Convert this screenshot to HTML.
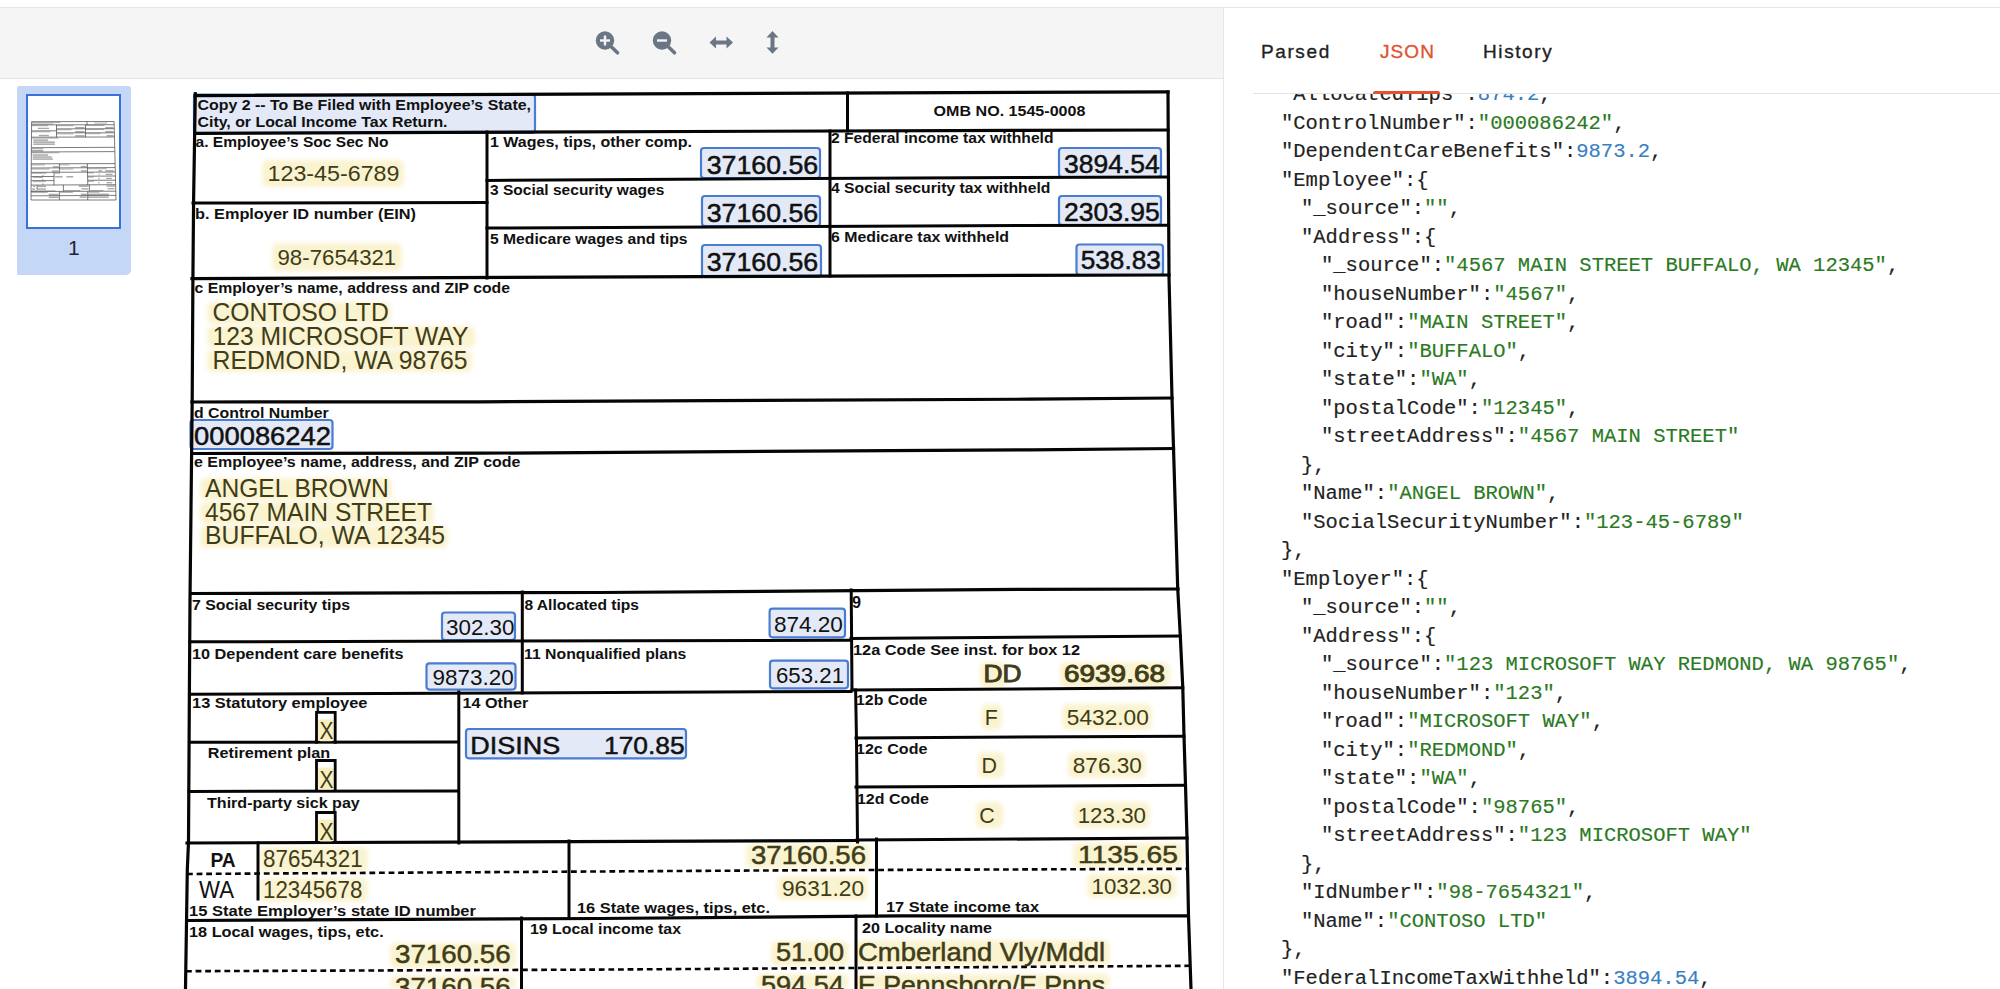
<!DOCTYPE html>
<html><head><meta charset="utf-8"><style>
html,body{margin:0;padding:0;}
body{width:2000px;height:989px;overflow:hidden;background:#fff;position:relative;font-family:"Liberation Sans",sans-serif;}
.abs{position:absolute;}
#topline{left:0;top:7px;width:2000px;height:1px;background:#e6e6e6;}
#toolbar{left:0;top:8px;width:1223px;height:70px;background:#f5f5f5;border-bottom:1px solid #e3e3e3;}
#vsep{left:1223px;top:8px;width:1px;height:981px;background:#e6e6e6;}
.form{position:absolute;left:0;top:0;}
#thumbbg{left:17px;top:85.5px;width:113.5px;height:189px;background:#c4d7f6;border-radius:2px 3px 5px 1px;}
#thumb{left:26px;top:94px;width:91px;height:131px;background:#fff;border:2.6px solid #3b6fd9;}
#thumbnum{left:17px;top:237.2px;width:113.5px;text-align:center;font-size:21px;line-height:21px;color:#1d2430;}
.tab{position:absolute;top:42px;font-size:19px;line-height:19px;color:#222;white-space:nowrap;letter-spacing:1.6px;-webkit-text-stroke:0.35px currentColor;}
#json{left:1223px;top:94px;width:777px;height:895px;overflow:hidden;}
.jl{position:absolute;white-space:pre;font-family:"Liberation Mono",monospace;font-size:20.5px;line-height:20.5px;-webkit-text-stroke:0.15px currentColor;}
</style></head><body>
<div class="abs" id="topline"></div>
<div class="abs" id="toolbar">
<svg style="position:absolute;left:0;top:0" width="1223" height="70" viewBox="0 8 1223 70">
 <g fill="#6b7684" stroke="none">
  <circle cx="605" cy="40.5" r="9.2"/>
  <circle cx="662" cy="40.5" r="9.2"/>
 </g>
 <g stroke="#6b7684" stroke-width="3.6" stroke-linecap="round">
  <line x1="611" y1="46.5" x2="617.5" y2="52.8"/>
  <line x1="668" y1="46.5" x2="674.5" y2="52.8"/>
 </g>
 <g stroke="#f5f5f5" stroke-width="2.4" stroke-linecap="butt">
  <line x1="600" y1="40.5" x2="610" y2="40.5"/>
  <line x1="605" y1="35.5" x2="605" y2="45.5"/>
  <line x1="657" y1="40.5" x2="667" y2="40.5"/>
 </g>
 <g fill="#6b7684">
  <path d="M709.5,42.5 L716,36.5 L716,40.5 L726.5,40.5 L726.5,36.5 L733,42.5 L726.5,48.5 L726.5,44.5 L716,44.5 L716,48.5 Z"/>
  <path d="M772.5,31 L778.5,37.5 L774.5,37.5 L774.5,47.5 L778.5,47.5 L772.5,53.8 L766.5,47.5 L770.5,47.5 L770.5,37.5 L766.5,37.5 Z"/>
 </g>
</svg>
</div>
<div class="abs" id="vsep"></div>
<div class="abs" id="thumbbg"></div>
<div class="abs" id="thumb"></div>
<svg style="position:absolute;left:0;top:0" width="150" height="300"><rect x="31.97" y="122.18" width="28.23" height="0.90" fill="#8a8a8a" opacity="0.75"/><rect x="31.97" y="123.56" width="21.17" height="0.90" fill="#8a8a8a" opacity="0.75"/><rect x="94.29" y="122.63" width="12.85" height="0.90" fill="#8a8a8a" opacity="0.75"/><rect x="31.80" y="125.25" width="16.34" height="0.90" fill="#8a8a8a" opacity="0.75"/><rect x="37.90" y="127.75" width="11.18" height="1.30" fill="#8a8a8a" opacity="0.75"/><rect x="31.76" y="131.39" width="18.71" height="0.90" fill="#8a8a8a" opacity="0.75"/><rect x="38.75" y="134.80" width="10.05" height="1.30" fill="#8a8a8a" opacity="0.75"/><rect x="56.74" y="125.25" width="17.10" height="0.90" fill="#8a8a8a" opacity="0.75"/><rect x="75.08" y="126.96" width="9.44" height="1.48" fill="#8a8a8a" opacity="0.75"/><rect x="56.74" y="129.33" width="14.76" height="0.90" fill="#8a8a8a" opacity="0.75"/><rect x="75.08" y="131.01" width="9.44" height="1.48" fill="#8a8a8a" opacity="0.75"/><rect x="56.74" y="133.47" width="16.73" height="0.90" fill="#8a8a8a" opacity="0.75"/><rect x="75.08" y="135.14" width="9.44" height="1.48" fill="#8a8a8a" opacity="0.75"/><rect x="85.61" y="124.93" width="18.84" height="0.90" fill="#8a8a8a" opacity="0.75"/><rect x="105.33" y="126.88" width="8.10" height="1.48" fill="#8a8a8a" opacity="0.75"/><rect x="85.61" y="129.16" width="18.57" height="0.90" fill="#8a8a8a" opacity="0.75"/><rect x="105.33" y="130.91" width="8.10" height="1.48" fill="#8a8a8a" opacity="0.75"/><rect x="85.61" y="133.29" width="15.07" height="0.90" fill="#8a8a8a" opacity="0.75"/><rect x="106.75" y="135.01" width="6.78" height="1.48" fill="#8a8a8a" opacity="0.75"/><rect x="31.72" y="137.64" width="26.71" height="0.90" fill="#8a8a8a" opacity="0.75"/><rect x="33.24" y="139.39" width="14.92" height="1.48" fill="#8a8a8a" opacity="0.75"/><rect x="33.24" y="141.42" width="21.67" height="1.48" fill="#8a8a8a" opacity="0.75"/><rect x="33.24" y="143.44" width="21.59" height="1.48" fill="#8a8a8a" opacity="0.75"/><rect x="31.68" y="148.22" width="11.41" height="0.90" fill="#8a8a8a" opacity="0.75"/><rect x="31.68" y="149.84" width="11.60" height="1.54" fill="#8a8a8a" opacity="0.75"/><rect x="31.68" y="152.39" width="27.64" height="0.90" fill="#8a8a8a" opacity="0.75"/><rect x="32.61" y="154.29" width="15.56" height="1.48" fill="#8a8a8a" opacity="0.75"/><rect x="32.61" y="156.30" width="19.22" height="1.48" fill="#8a8a8a" opacity="0.75"/><rect x="32.61" y="158.32" width="20.32" height="1.48" fill="#8a8a8a" opacity="0.75"/><rect x="31.51" y="164.47" width="13.38" height="0.90" fill="#8a8a8a" opacity="0.75"/><rect x="53.01" y="166.14" width="5.80" height="1.33" fill="#8a8a8a" opacity="0.75"/><rect x="59.65" y="164.44" width="9.70" height="0.90" fill="#8a8a8a" opacity="0.75"/><rect x="80.77" y="165.88" width="5.84" height="1.33" fill="#8a8a8a" opacity="0.75"/><rect x="87.38" y="164.19" width="0.76" height="0.95" fill="#8a8a8a" opacity="0.75"/><rect x="31.51" y="168.61" width="17.91" height="0.90" fill="#8a8a8a" opacity="0.75"/><rect x="51.87" y="170.39" width="6.87" height="1.33" fill="#8a8a8a" opacity="0.75"/><rect x="59.62" y="168.61" width="13.75" height="0.90" fill="#8a8a8a" opacity="0.75"/><rect x="80.95" y="170.21" width="5.76" height="1.32" fill="#8a8a8a" opacity="0.75"/><rect x="87.47" y="168.30" width="19.22" height="0.90" fill="#8a8a8a" opacity="0.75"/><rect x="98.51" y="170.12" width="3.22" height="1.36" fill="#8a8a8a" opacity="0.75"/><rect x="105.33" y="170.12" width="8.55" height="1.36" fill="#8a8a8a" opacity="0.75"/><rect x="87.72" y="172.51" width="6.04" height="0.90" fill="#8a8a8a" opacity="0.75"/><rect x="98.63" y="173.74" width="1.10" height="1.33" fill="#8a8a8a" opacity="0.75"/><rect x="105.57" y="173.74" width="6.94" height="1.33" fill="#8a8a8a" opacity="0.75"/><rect x="87.72" y="176.67" width="6.04" height="0.90" fill="#8a8a8a" opacity="0.75"/><rect x="98.35" y="177.79" width="1.31" height="1.33" fill="#8a8a8a" opacity="0.75"/><rect x="106.08" y="177.79" width="5.84" height="1.33" fill="#8a8a8a" opacity="0.75"/><rect x="87.81" y="180.88" width="6.08" height="0.90" fill="#8a8a8a" opacity="0.75"/><rect x="98.16" y="182.05" width="1.31" height="1.33" fill="#8a8a8a" opacity="0.75"/><rect x="106.49" y="182.05" width="5.78" height="1.33" fill="#8a8a8a" opacity="0.75"/><rect x="31.51" y="172.79" width="14.86" height="0.90" fill="#8a8a8a" opacity="0.75"/><rect x="54.41" y="172.73" width="5.56" height="0.90" fill="#8a8a8a" opacity="0.75"/><rect x="55.07" y="176.05" width="7.62" height="1.45" fill="#8a8a8a" opacity="0.75"/><rect x="66.39" y="176.05" width="6.83" height="1.45" fill="#8a8a8a" opacity="0.75"/><rect x="32.85" y="176.99" width="10.36" height="0.90" fill="#8a8a8a" opacity="0.75"/><rect x="32.78" y="181.22" width="12.94" height="0.90" fill="#8a8a8a" opacity="0.75"/><rect x="42.30" y="174.94" width="1.19" height="1.36" fill="#8a8a8a" opacity="0.75"/><rect x="42.30" y="179.02" width="1.19" height="1.36" fill="#8a8a8a" opacity="0.75"/><rect x="42.30" y="183.42" width="1.19" height="1.36" fill="#8a8a8a" opacity="0.75"/><rect x="33.07" y="185.84" width="2.13" height="1.24" fill="#8a8a8a" opacity="0.75"/><rect x="37.52" y="185.71" width="8.44" height="1.39" fill="#8a8a8a" opacity="0.75"/><rect x="32.10" y="188.38" width="2.96" height="1.39" fill="#8a8a8a" opacity="0.75"/><rect x="37.52" y="188.38" width="8.41" height="1.39" fill="#8a8a8a" opacity="0.75"/><rect x="31.25" y="190.40" width="24.30" height="0.90" fill="#8a8a8a" opacity="0.75"/><rect x="78.83" y="185.38" width="9.74" height="1.48" fill="#8a8a8a" opacity="0.75"/><rect x="81.46" y="188.23" width="6.94" height="1.34" fill="#8a8a8a" opacity="0.75"/><rect x="64.10" y="190.10" width="16.34" height="0.90" fill="#8a8a8a" opacity="0.75"/><rect x="106.52" y="185.35" width="8.47" height="1.42" fill="#8a8a8a" opacity="0.75"/><rect x="107.67" y="188.04" width="6.81" height="1.32" fill="#8a8a8a" opacity="0.75"/><rect x="90.26" y="190.03" width="12.95" height="0.90" fill="#8a8a8a" opacity="0.75"/><rect x="31.25" y="192.18" width="16.48" height="0.90" fill="#8a8a8a" opacity="0.75"/><rect x="48.69" y="193.78" width="9.80" height="1.48" fill="#8a8a8a" opacity="0.75"/><rect x="48.69" y="196.55" width="9.80" height="1.48" fill="#8a8a8a" opacity="0.75"/><rect x="60.12" y="191.89" width="12.78" height="0.90" fill="#8a8a8a" opacity="0.75"/><rect x="80.95" y="193.59" width="5.76" height="1.48" fill="#8a8a8a" opacity="0.75"/><rect x="79.68" y="196.38" width="7.03" height="1.48" fill="#8a8a8a" opacity="0.75"/><rect x="88.23" y="191.79" width="11.01" height="0.90" fill="#8a8a8a" opacity="0.75"/><rect x="87.89" y="193.59" width="20.91" height="1.48" fill="#8a8a8a" opacity="0.75"/><rect x="87.89" y="196.38" width="20.91" height="1.48" fill="#8a8a8a" opacity="0.75"/><line x1="31.6" y1="121.7" x2="114.1" y2="121.5" stroke="#444" stroke-width="0.7"/><line x1="31.6" y1="124.9" x2="114.1" y2="124.7" stroke="#444" stroke-width="0.7"/><line x1="56.5" y1="128.9" x2="114.1" y2="128.7" stroke="#444" stroke-width="0.7"/><line x1="31.6" y1="130.9" x2="56.5" y2="130.8" stroke="#444" stroke-width="0.7"/><line x1="56.5" y1="132.8" x2="114.1" y2="132.8" stroke="#444" stroke-width="0.7"/><line x1="31.5" y1="137.2" x2="114.2" y2="137.0" stroke="#444" stroke-width="0.7"/><line x1="31.5" y1="147.7" x2="114.5" y2="147.3" stroke="#444" stroke-width="0.7"/><line x1="31.5" y1="152.0" x2="114.6" y2="151.6" stroke="#444" stroke-width="0.7"/><line x1="31.4" y1="163.8" x2="115.0" y2="163.6" stroke="#444" stroke-width="0.7"/><line x1="31.3" y1="168.0" x2="115.2" y2="167.6" stroke="#444" stroke-width="0.7"/><line x1="31.3" y1="172.4" x2="115.3" y2="172.0" stroke="#444" stroke-width="0.7"/><line x1="31.3" y1="176.5" x2="54.0" y2="176.5" stroke="#444" stroke-width="0.7"/><line x1="87.7" y1="176.2" x2="115.5" y2="176.0" stroke="#444" stroke-width="0.7"/><line x1="31.3" y1="180.6" x2="54.0" y2="180.6" stroke="#444" stroke-width="0.7"/><line x1="87.7" y1="180.3" x2="115.6" y2="180.2" stroke="#444" stroke-width="0.7"/><line x1="31.1" y1="185.1" x2="115.7" y2="184.7" stroke="#444" stroke-width="0.7"/><line x1="31.1" y1="191.5" x2="115.8" y2="191.2" stroke="#444" stroke-width="0.7"/><line x1="31.1" y1="195.8" x2="115.9" y2="195.4" stroke="#444" stroke-width="0.7"/><line x1="31.6" y1="121.6" x2="31.0" y2="200.0" stroke="#444" stroke-width="0.7"/><line x1="114.1" y1="121.5" x2="116.0" y2="200.0" stroke="#444" stroke-width="0.7"/><line x1="56.5" y1="124.9" x2="56.5" y2="137.2" stroke="#444" stroke-width="0.7"/><line x1="85.5" y1="124.8" x2="85.5" y2="137.1" stroke="#444" stroke-width="0.7"/><line x1="87.0" y1="121.6" x2="87.0" y2="124.8" stroke="#444" stroke-width="0.7"/><line x1="59.4" y1="163.8" x2="59.4" y2="172.4" stroke="#444" stroke-width="0.7"/><line x1="87.3" y1="163.7" x2="87.8" y2="185.0" stroke="#444" stroke-width="0.7"/><line x1="54.0" y1="172.3" x2="54.0" y2="185.1" stroke="#444" stroke-width="0.7"/><line x1="37.1" y1="185.1" x2="37.1" y2="189.8" stroke="#444" stroke-width="0.7"/><line x1="63.4" y1="184.9" x2="63.4" y2="191.3" stroke="#444" stroke-width="0.7"/><line x1="89.4" y1="184.7" x2="89.4" y2="191.3" stroke="#444" stroke-width="0.7"/><line x1="59.4" y1="191.4" x2="59.4" y2="200.0" stroke="#444" stroke-width="0.7"/><line x1="87.7" y1="191.3" x2="87.7" y2="200.0" stroke="#444" stroke-width="0.7"/><line x1="31.1" y1="200.0" x2="116.0" y2="200.0" stroke="#444" stroke-width="0.7"/></svg>
<div class="abs" id="thumbnum">1</div>
<svg class="form" width="1223" height="989" viewBox="0 0 1223 989"><defs><filter id="blur" x="-20%" y="-40%" width="140%" height="180%"><feGaussianBlur stdDeviation="2"/></filter></defs><rect x="262" y="160" width="142" height="27" rx="6" fill="#faf3d0" filter="url(#blur)"/><rect x="272" y="243" width="130" height="28" rx="6" fill="#faf3d0" filter="url(#blur)"/><rect x="207" y="302" width="184" height="22" rx="6" fill="#faf3d0" filter="url(#blur)"/><rect x="207" y="326" width="268" height="22" rx="6" fill="#faf3d0" filter="url(#blur)"/><rect x="207" y="350" width="265" height="22" rx="6" fill="#faf3d0" filter="url(#blur)"/><rect x="200" y="478" width="192" height="22" rx="6" fill="#faf3d0" filter="url(#blur)"/><rect x="200" y="502" width="234" height="22" rx="6" fill="#faf3d0" filter="url(#blur)"/><rect x="200" y="526" width="248" height="22" rx="6" fill="#faf3d0" filter="url(#blur)"/><rect x="980" y="662" width="26" height="26" rx="6" fill="#faf3d0" filter="url(#blur)"/><rect x="1060" y="662" width="110" height="26" rx="6" fill="#faf3d0" filter="url(#blur)"/><rect x="981" y="704" width="21" height="26" rx="6" fill="#faf3d0" filter="url(#blur)"/><rect x="1062" y="704" width="90" height="26" rx="6" fill="#faf3d0" filter="url(#blur)"/><rect x="978" y="752" width="26" height="26" rx="6" fill="#faf3d0" filter="url(#blur)"/><rect x="1068" y="752" width="78" height="26" rx="6" fill="#faf3d0" filter="url(#blur)"/><rect x="976" y="802" width="27" height="26" rx="6" fill="#faf3d0" filter="url(#blur)"/><rect x="1074" y="802" width="76" height="26" rx="6" fill="#faf3d0" filter="url(#blur)"/><rect x="260" y="847" width="108" height="25" rx="6" fill="#faf3d0" filter="url(#blur)"/><rect x="260" y="878" width="108" height="24" rx="6" fill="#faf3d0" filter="url(#blur)"/><rect x="746" y="844" width="124" height="24" rx="6" fill="#faf3d0" filter="url(#blur)"/><rect x="777" y="876" width="91" height="24" rx="6" fill="#faf3d0" filter="url(#blur)"/><rect x="1073" y="843" width="110" height="25" rx="6" fill="#faf3d0" filter="url(#blur)"/><rect x="1087" y="874" width="90" height="24" rx="6" fill="#faf3d0" filter="url(#blur)"/><rect x="390" y="943" width="126" height="25" rx="6" fill="#faf3d0" filter="url(#blur)"/><rect x="390" y="976" width="126" height="13" rx="6" fill="#faf3d0" filter="url(#blur)"/><rect x="771" y="941" width="78" height="25" rx="6" fill="#faf3d0" filter="url(#blur)"/><rect x="756" y="974" width="93" height="15" rx="6" fill="#faf3d0" filter="url(#blur)"/><rect x="856" y="940" width="254" height="26" rx="6" fill="#faf3d0" filter="url(#blur)"/><rect x="856" y="974" width="254" height="15" rx="6" fill="#faf3d0" filter="url(#blur)"/><rect x="194" y="94.5" width="341" height="38.5" rx="3" fill="#e3e9f7" stroke="#4a7cd0" stroke-width="2.2"/><rect x="701" y="148" width="119" height="30" rx="3" fill="#e3e9f7" stroke="#4a7cd0" stroke-width="2.2"/><rect x="702" y="196" width="118" height="30" rx="3" fill="#e3e9f7" stroke="#4a7cd0" stroke-width="2.2"/><rect x="702" y="245" width="119" height="32" rx="3" fill="#e3e9f7" stroke="#4a7cd0" stroke-width="2.2"/><rect x="1059" y="148" width="102" height="29" rx="3" fill="#e3e9f7" stroke="#4a7cd0" stroke-width="2.2"/><rect x="1059" y="196" width="102" height="29" rx="3" fill="#e3e9f7" stroke="#4a7cd0" stroke-width="2.2"/><rect x="1076.5" y="244.5" width="86.5" height="30.5" rx="3" fill="#e3e9f7" stroke="#4a7cd0" stroke-width="2.2"/><rect x="190.5" y="420" width="142.0" height="29" rx="3" fill="#e3e9f7" stroke="#4a7cd0" stroke-width="2.2"/><rect x="442" y="612.5" width="73" height="27.5" rx="3" fill="#e3e9f7" stroke="#4a7cd0" stroke-width="2.2"/><rect x="769.6" y="608.7" width="75.39999999999998" height="28.59999999999991" rx="3" fill="#e3e9f7" stroke="#4a7cd0" stroke-width="2.2"/><rect x="426.5" y="663.4" width="89.0" height="26.200000000000045" rx="3" fill="#e3e9f7" stroke="#4a7cd0" stroke-width="2.2"/><rect x="770" y="660.7" width="78" height="27.59999999999991" rx="3" fill="#e3e9f7" stroke="#4a7cd0" stroke-width="2.2"/><rect x="466" y="729" width="220" height="29.299999999999955" rx="3" fill="#e3e9f7" stroke="#4a7cd0" stroke-width="2.2"/><polyline points="195.3,93.7 193.6,200 192.9,280 192.2,400 190,600 189.4,690 188.5,842 187.3,870 185.5,989" fill="none" stroke="#050505" stroke-width="3.2" stroke-linecap="square"/><polyline points="1168,92 1169,277 1172,398 1173.5,448 1177.7,588 1180.3,636 1182.8,688 1184,736 1185.5,785 1187,838 1188.5,916 1191,989" fill="none" stroke="#050505" stroke-width="3.2" stroke-linecap="square"/><polyline points="195,95.6 1168,91.8" fill="none" stroke="#050505" stroke-width="3.2" stroke-linecap="square"/><polyline points="195,133.3 1020,130.3 1168,130" fill="none" stroke="#050505" stroke-width="3.2" stroke-linecap="square"/><polyline points="487,180.4 1020,177.4 1168,177" fill="none" stroke="#050505" stroke-width="3.0" stroke-linecap="square"/><polyline points="193,203 487,202.5" fill="none" stroke="#050505" stroke-width="3.0" stroke-linecap="square"/><polyline points="487,228 1020,225.6 1168,225.3" fill="none" stroke="#050505" stroke-width="3.0" stroke-linecap="square"/><polyline points="192,278.6 1020,275.4 1169,275" fill="none" stroke="#050505" stroke-width="3.2" stroke-linecap="square"/><polyline points="192,402 480,401.8 1030,399.2 1172,398" fill="none" stroke="#050505" stroke-width="3.2" stroke-linecap="square"/><polyline points="192,453.5 480,453.2 1030,449.8 1173.5,448.5" fill="none" stroke="#050505" stroke-width="3.2" stroke-linecap="square"/><polyline points="191,593.5 600,592.5 1030,589.3 1178,589" fill="none" stroke="#050505" stroke-width="3.2" stroke-linecap="square"/><polyline points="190,641.8 851,640.3" fill="none" stroke="#050505" stroke-width="3.0" stroke-linecap="square"/><polyline points="851,638.5 1180.3,636" fill="none" stroke="#050505" stroke-width="3.0" stroke-linecap="square"/><polyline points="189.5,694.2 851,691.5" fill="none" stroke="#050505" stroke-width="3.0" stroke-linecap="square"/><polyline points="852,690 1182.8,687.8" fill="none" stroke="#050505" stroke-width="3.0" stroke-linecap="square"/><polyline points="190,742.3 458,742" fill="none" stroke="#050505" stroke-width="3.0" stroke-linecap="square"/><polyline points="856,738 1184,736.2" fill="none" stroke="#050505" stroke-width="3.0" stroke-linecap="square"/><polyline points="189,791.4 458,791.1" fill="none" stroke="#050505" stroke-width="3.0" stroke-linecap="square"/><polyline points="856,787 1185.5,785.3" fill="none" stroke="#050505" stroke-width="3.0" stroke-linecap="square"/><polyline points="187,843 858,840.5" fill="none" stroke="#050505" stroke-width="3.2" stroke-linecap="square"/><polyline points="857,840 1187,838" fill="none" stroke="#050505" stroke-width="3.2" stroke-linecap="square"/><polyline points="187,874 380,872.8 810,870.2 1187,868.8" fill="none" stroke="#050505" stroke-width="2.6" stroke-linecap="butt" stroke-dasharray="5.8,3.8"/><polyline points="187,920.5 600,918.5 900,915.9 1188,915.8" fill="none" stroke="#050505" stroke-width="3.2" stroke-linecap="square"/><polyline points="186,971.2 600,969.6 1189,965.8" fill="none" stroke="#050505" stroke-width="2.6" stroke-linecap="butt" stroke-dasharray="5.8,3.8"/><polyline points="487,132 487,278" fill="none" stroke="#050505" stroke-width="3.0" stroke-linecap="square"/><polyline points="830,131 830,276" fill="none" stroke="#050505" stroke-width="3.0" stroke-linecap="square"/><polyline points="847.5,93 847.5,131" fill="none" stroke="#050505" stroke-width="3.0" stroke-linecap="square"/><polyline points="522.3,592 522.3,693" fill="none" stroke="#050505" stroke-width="3.0" stroke-linecap="square"/><polyline points="851.2,590 852,690" fill="none" stroke="#050505" stroke-width="3.0" stroke-linecap="square"/><polyline points="855.6,690 856.5,740 857.5,842" fill="none" stroke="#050505" stroke-width="3.0" stroke-linecap="square"/><polyline points="458.8,692 458.8,843" fill="none" stroke="#050505" stroke-width="3.0" stroke-linecap="square"/><polyline points="258,843 258,899" fill="none" stroke="#050505" stroke-width="3.0" stroke-linecap="square"/><polyline points="569,841 569,917" fill="none" stroke="#050505" stroke-width="3.0" stroke-linecap="square"/><polyline points="876.5,839 876.5,916" fill="none" stroke="#050505" stroke-width="3.0" stroke-linecap="square"/><polyline points="521.5,918 521.5,989" fill="none" stroke="#050505" stroke-width="3.0" stroke-linecap="square"/><polyline points="856,916 856,989" fill="none" stroke="#050505" stroke-width="3.0" stroke-linecap="square"/><rect x="318" y="719.3" width="16" height="22" rx="3" fill="#f8efc0"/><polyline points="316.5,742.3 316.5,712.3 335.2,712.3 335.2,742.3" fill="none" stroke="#050505" stroke-width="2.8" stroke-linecap="square"/><rect x="318" y="767.5" width="16" height="22" rx="3" fill="#f8efc0"/><polyline points="316.5,790.5 316.5,760.5 335.2,760.5 335.2,790.5" fill="none" stroke="#050505" stroke-width="2.8" stroke-linecap="square"/><rect x="318" y="819.5" width="16" height="22" rx="3" fill="#f8efc0"/><polyline points="316.5,842.5 316.5,812.5 335.2,812.5 335.2,842.5" fill="none" stroke="#050505" stroke-width="2.8" stroke-linecap="square"/><text x="197.5" y="110.45" textLength="333.5" lengthAdjust="spacingAndGlyphs" font-family="Liberation Sans" font-size="14.8" font-weight="bold" fill="#111">Copy 2 -- To Be Filed with Employee’s State,</text><text x="197.5" y="126.7" textLength="250" lengthAdjust="spacingAndGlyphs" font-family="Liberation Sans" font-size="14.8" font-weight="bold" fill="#111">City, or Local Income Tax Return.</text><text x="933.6" y="115.7" textLength="151.8" lengthAdjust="spacingAndGlyphs" font-family="Liberation Sans" font-size="14.8" font-weight="bold" fill="#111">OMB NO. 1545-0008</text><text x="195.5" y="146.7" textLength="193" lengthAdjust="spacingAndGlyphs" font-family="Liberation Sans" font-size="14.8" font-weight="bold" fill="#111">a. Employee’s Soc Sec No</text><text x="267.5" y="181.25" textLength="132" lengthAdjust="spacingAndGlyphs" font-family="Liberation Sans" font-size="22" font-weight="normal" fill="#403c18">123-45-6789</text><text x="195" y="219.2" textLength="221" lengthAdjust="spacingAndGlyphs" font-family="Liberation Sans" font-size="14.8" font-weight="bold" fill="#111">b. Employer ID number (EIN)</text><text x="277.5" y="264.5" textLength="118.75" lengthAdjust="spacingAndGlyphs" font-family="Liberation Sans" font-size="22" font-weight="normal" fill="#403c18">98-7654321</text><text x="490" y="146.7" textLength="202" lengthAdjust="spacingAndGlyphs" font-family="Liberation Sans" font-size="14.8" font-weight="bold" fill="#111">1 Wages, tips, other comp.</text><text x="706.7" y="174" textLength="111.5" lengthAdjust="spacingAndGlyphs" font-family="Liberation Sans" font-size="25" font-weight="normal" fill="#111" stroke="#111" stroke-width="0.5">37160.56</text><text x="490" y="194.9" textLength="174.3" lengthAdjust="spacingAndGlyphs" font-family="Liberation Sans" font-size="14.8" font-weight="bold" fill="#111">3 Social security wages</text><text x="706.7" y="221.8" textLength="111.5" lengthAdjust="spacingAndGlyphs" font-family="Liberation Sans" font-size="25" font-weight="normal" fill="#111" stroke="#111" stroke-width="0.5">37160.56</text><text x="490" y="243.7" textLength="197.6" lengthAdjust="spacingAndGlyphs" font-family="Liberation Sans" font-size="14.8" font-weight="bold" fill="#111">5 Medicare wages and tips</text><text x="706.7" y="270.6" textLength="111.5" lengthAdjust="spacingAndGlyphs" font-family="Liberation Sans" font-size="25" font-weight="normal" fill="#111" stroke="#111" stroke-width="0.5">37160.56</text><text x="831" y="142.9" textLength="222.5" lengthAdjust="spacingAndGlyphs" font-family="Liberation Sans" font-size="14.8" font-weight="bold" fill="#111">2 Federal income tax withheld</text><text x="1064" y="173" textLength="95.7" lengthAdjust="spacingAndGlyphs" font-family="Liberation Sans" font-size="25" font-weight="normal" fill="#111" stroke="#111" stroke-width="0.5">3894.54</text><text x="831" y="192.8" textLength="219.4" lengthAdjust="spacingAndGlyphs" font-family="Liberation Sans" font-size="14.8" font-weight="bold" fill="#111">4 Social security tax withheld</text><text x="1064" y="220.7" textLength="95.7" lengthAdjust="spacingAndGlyphs" font-family="Liberation Sans" font-size="25" font-weight="normal" fill="#111" stroke="#111" stroke-width="0.5">2303.95</text><text x="831" y="241.6" textLength="178" lengthAdjust="spacingAndGlyphs" font-family="Liberation Sans" font-size="14.8" font-weight="bold" fill="#111">6 Medicare tax withheld</text><text x="1080.7" y="269.1" textLength="80.1" lengthAdjust="spacingAndGlyphs" font-family="Liberation Sans" font-size="25" font-weight="normal" fill="#111" stroke="#111" stroke-width="0.5">538.83</text><text x="194.5" y="292.95" textLength="315.5" lengthAdjust="spacingAndGlyphs" font-family="Liberation Sans" font-size="14.8" font-weight="bold" fill="#111">c Employer’s name, address and ZIP code</text><text x="212.5" y="320.8" textLength="176.25" lengthAdjust="spacingAndGlyphs" font-family="Liberation Sans" font-size="25" font-weight="normal" fill="#403c18">CONTOSO LTD</text><text x="212.5" y="344.8" textLength="256" lengthAdjust="spacingAndGlyphs" font-family="Liberation Sans" font-size="25" font-weight="normal" fill="#403c18">123 MICROSOFT WAY</text><text x="212.5" y="368.6" textLength="255" lengthAdjust="spacingAndGlyphs" font-family="Liberation Sans" font-size="25" font-weight="normal" fill="#403c18">REDMOND, WA 98765</text><text x="194" y="417.95" textLength="134.75" lengthAdjust="spacingAndGlyphs" font-family="Liberation Sans" font-size="14.8" font-weight="bold" fill="#111">d Control Number</text><text x="194" y="445" textLength="137" lengthAdjust="spacingAndGlyphs" font-family="Liberation Sans" font-size="26" font-weight="normal" fill="#111" stroke="#111" stroke-width="0.5">000086242</text><text x="194" y="467.2" textLength="326.5" lengthAdjust="spacingAndGlyphs" font-family="Liberation Sans" font-size="14.8" font-weight="bold" fill="#111">e Employee’s name, address, and ZIP code</text><text x="205" y="496.8" textLength="183.75" lengthAdjust="spacingAndGlyphs" font-family="Liberation Sans" font-size="25" font-weight="normal" fill="#403c18">ANGEL BROWN</text><text x="205" y="520.6" textLength="227" lengthAdjust="spacingAndGlyphs" font-family="Liberation Sans" font-size="25" font-weight="normal" fill="#403c18">4567 MAIN STREET</text><text x="205" y="544.4" textLength="240" lengthAdjust="spacingAndGlyphs" font-family="Liberation Sans" font-size="25" font-weight="normal" fill="#403c18">BUFFALO, WA 12345</text><text x="192" y="609.95" textLength="158" lengthAdjust="spacingAndGlyphs" font-family="Liberation Sans" font-size="14.8" font-weight="bold" fill="#111">7 Social security tips</text><text x="446" y="635" textLength="68.5" lengthAdjust="spacingAndGlyphs" font-family="Liberation Sans" font-size="22.4" font-weight="normal" fill="#111">302.30</text><text x="524.4" y="609.6" textLength="114.6" lengthAdjust="spacingAndGlyphs" font-family="Liberation Sans" font-size="14.8" font-weight="bold" fill="#111">8 Allocated tips</text><text x="773.9" y="632" textLength="69" lengthAdjust="spacingAndGlyphs" font-family="Liberation Sans" font-size="22.5" font-weight="normal" fill="#111">874.20</text><text x="852" y="607.5" textLength="9" lengthAdjust="spacingAndGlyphs" font-family="Liberation Sans" font-size="16" font-weight="bold" fill="#111">9</text><text x="192" y="658.8" textLength="211.6" lengthAdjust="spacingAndGlyphs" font-family="Liberation Sans" font-size="14.8" font-weight="bold" fill="#111">10 Dependent care benefits</text><text x="432.5" y="685.2" textLength="81.2" lengthAdjust="spacingAndGlyphs" font-family="Liberation Sans" font-size="22.5" font-weight="normal" fill="#111">9873.20</text><text x="524" y="658.8" textLength="162.4" lengthAdjust="spacingAndGlyphs" font-family="Liberation Sans" font-size="14.8" font-weight="bold" fill="#111">11 Nonqualified plans</text><text x="776" y="683" textLength="68" lengthAdjust="spacingAndGlyphs" font-family="Liberation Sans" font-size="22.3" font-weight="normal" fill="#111">653.21</text><text x="853" y="655.2" textLength="227" lengthAdjust="spacingAndGlyphs" font-family="Liberation Sans" font-size="14.8" font-weight="bold" fill="#111">12a Code See inst. for box 12</text><text x="983.4" y="682.4" textLength="38" lengthAdjust="spacingAndGlyphs" font-family="Liberation Sans" font-size="23" font-weight="normal" fill="#403c18" stroke="#403c18" stroke-width="0.9">DD</text><text x="1064" y="682.4" textLength="101" lengthAdjust="spacingAndGlyphs" font-family="Liberation Sans" font-size="23" font-weight="normal" fill="#403c18" stroke="#403c18" stroke-width="0.9">6939.68</text><text x="856" y="704.9" textLength="71.4" lengthAdjust="spacingAndGlyphs" font-family="Liberation Sans" font-size="14.8" font-weight="bold" fill="#111">12b Code</text><text x="984.8" y="724.8" textLength="13" lengthAdjust="spacingAndGlyphs" font-family="Liberation Sans" font-size="22.5" font-weight="normal" fill="#403c18">F</text><text x="1066.8" y="724.8" textLength="82" lengthAdjust="spacingAndGlyphs" font-family="Liberation Sans" font-size="22.5" font-weight="normal" fill="#403c18">5432.00</text><text x="856" y="754.0" textLength="71.4" lengthAdjust="spacingAndGlyphs" font-family="Liberation Sans" font-size="14.8" font-weight="bold" fill="#111">12c Code</text><text x="981.5" y="772.6" textLength="15.5" lengthAdjust="spacingAndGlyphs" font-family="Liberation Sans" font-size="22.5" font-weight="normal" fill="#403c18">D</text><text x="1072.8" y="772.6" textLength="69" lengthAdjust="spacingAndGlyphs" font-family="Liberation Sans" font-size="22.5" font-weight="normal" fill="#403c18">876.30</text><text x="857" y="803.8" textLength="71.8" lengthAdjust="spacingAndGlyphs" font-family="Liberation Sans" font-size="14.8" font-weight="bold" fill="#111">12d Code</text><text x="979.3" y="823" textLength="15.5" lengthAdjust="spacingAndGlyphs" font-family="Liberation Sans" font-size="22.5" font-weight="normal" fill="#403c18">C</text><text x="1077.7" y="823" textLength="68.3" lengthAdjust="spacingAndGlyphs" font-family="Liberation Sans" font-size="22.5" font-weight="normal" fill="#403c18">123.30</text><text x="192" y="708.2" textLength="175.5" lengthAdjust="spacingAndGlyphs" font-family="Liberation Sans" font-size="14.8" font-weight="bold" fill="#111">13 Statutory employee</text><text x="462.5" y="707.5" textLength="65.7" lengthAdjust="spacingAndGlyphs" font-family="Liberation Sans" font-size="14.8" font-weight="bold" fill="#111">14 Other</text><text x="470.3" y="753.5" textLength="90" lengthAdjust="spacingAndGlyphs" font-family="Liberation Sans" font-size="24.5" font-weight="normal" fill="#111" stroke="#111" stroke-width="0.5">DISINS</text><text x="604" y="753.5" textLength="80.7" lengthAdjust="spacingAndGlyphs" font-family="Liberation Sans" font-size="24.5" font-weight="normal" fill="#111" stroke="#111" stroke-width="0.5">170.85</text><text x="207.8" y="757.8" textLength="122.4" lengthAdjust="spacingAndGlyphs" font-family="Liberation Sans" font-size="14.8" font-weight="bold" fill="#111">Retirement plan</text><text x="207" y="807.8" textLength="152.8" lengthAdjust="spacingAndGlyphs" font-family="Liberation Sans" font-size="14.8" font-weight="bold" fill="#111">Third-party sick pay</text><text x="319.5" y="739.3" textLength="14" lengthAdjust="spacingAndGlyphs" font-family="Liberation Sans" font-size="23" font-weight="normal" fill="#403c18">X</text><text x="319.5" y="787.5" textLength="14" lengthAdjust="spacingAndGlyphs" font-family="Liberation Sans" font-size="23" font-weight="normal" fill="#403c18">X</text><text x="319.5" y="839.5" textLength="14" lengthAdjust="spacingAndGlyphs" font-family="Liberation Sans" font-size="23" font-weight="normal" fill="#403c18">X</text><text x="210.4" y="866.7" textLength="25.2" lengthAdjust="spacingAndGlyphs" font-family="Liberation Sans" font-size="21" font-weight="bold" fill="#111">PA</text><text x="263" y="866.9" textLength="99.7" lengthAdjust="spacingAndGlyphs" font-family="Liberation Sans" font-size="23.5" font-weight="normal" fill="#403c18">87654321</text><text x="199" y="898.4" textLength="35" lengthAdjust="spacingAndGlyphs" font-family="Liberation Sans" font-size="23.5" font-weight="normal" fill="#111">WA</text><text x="263" y="898.4" textLength="99.3" lengthAdjust="spacingAndGlyphs" font-family="Liberation Sans" font-size="23.5" font-weight="normal" fill="#403c18">12345678</text><text x="189" y="916.2" textLength="287" lengthAdjust="spacingAndGlyphs" font-family="Liberation Sans" font-size="14.8" font-weight="bold" fill="#111">15 State Employer’s state ID number</text><text x="751" y="864" textLength="115" lengthAdjust="spacingAndGlyphs" font-family="Liberation Sans" font-size="25" font-weight="normal" fill="#403c18" stroke="#403c18" stroke-width="0.5">37160.56</text><text x="782" y="896" textLength="82" lengthAdjust="spacingAndGlyphs" font-family="Liberation Sans" font-size="22.6" font-weight="normal" fill="#403c18">9631.20</text><text x="577" y="912.6" textLength="193" lengthAdjust="spacingAndGlyphs" font-family="Liberation Sans" font-size="14.8" font-weight="bold" fill="#111">16 State wages, tips, etc.</text><text x="1078" y="863" textLength="100" lengthAdjust="spacingAndGlyphs" font-family="Liberation Sans" font-size="24" font-weight="normal" fill="#403c18" stroke="#403c18" stroke-width="0.5">1135.65</text><text x="1091.6" y="893.6" textLength="80.4" lengthAdjust="spacingAndGlyphs" font-family="Liberation Sans" font-size="22.3" font-weight="normal" fill="#403c18">1032.30</text><text x="886" y="911.8" textLength="153" lengthAdjust="spacingAndGlyphs" font-family="Liberation Sans" font-size="14.8" font-weight="bold" fill="#111">17 State income tax</text><text x="189" y="937.2" textLength="194.7" lengthAdjust="spacingAndGlyphs" font-family="Liberation Sans" font-size="14.8" font-weight="bold" fill="#111">18 Local wages, tips, etc.</text><text x="395" y="963.3" textLength="115.7" lengthAdjust="spacingAndGlyphs" font-family="Liberation Sans" font-size="25" font-weight="normal" fill="#403c18" stroke="#403c18" stroke-width="0.5">37160.56</text><text x="395" y="996" textLength="115.7" lengthAdjust="spacingAndGlyphs" font-family="Liberation Sans" font-size="25" font-weight="normal" fill="#403c18" stroke="#403c18" stroke-width="0.5">37160.56</text><text x="530" y="933.8" textLength="151" lengthAdjust="spacingAndGlyphs" font-family="Liberation Sans" font-size="14.8" font-weight="bold" fill="#111">19 Local income tax</text><text x="776" y="961" textLength="68" lengthAdjust="spacingAndGlyphs" font-family="Liberation Sans" font-size="25" font-weight="normal" fill="#403c18" stroke="#403c18" stroke-width="0.5">51.00</text><text x="761" y="994" textLength="83" lengthAdjust="spacingAndGlyphs" font-family="Liberation Sans" font-size="25" font-weight="normal" fill="#403c18" stroke="#403c18" stroke-width="0.5">594.54</text><text x="862" y="932.6" textLength="130" lengthAdjust="spacingAndGlyphs" font-family="Liberation Sans" font-size="14.8" font-weight="bold" fill="#111">20 Locality name</text><text x="858" y="961" textLength="247" lengthAdjust="spacingAndGlyphs" font-family="Liberation Sans" font-size="25" font-weight="normal" fill="#403c18" stroke="#403c18" stroke-width="0.5">Cmberland Vly/Mddl</text><text x="858" y="994" textLength="247" lengthAdjust="spacingAndGlyphs" font-family="Liberation Sans" font-size="25" font-weight="normal" fill="#403c18" stroke="#403c18" stroke-width="0.5">E Pennsboro/E Pnns</text></svg>
<div class="tab" style="left:1261px">Parsed</div>
<div class="tab" style="left:1380px;color:#e1532f;letter-spacing:1.1px">JSON</div>
<div class="tab" style="left:1483px">History</div>
<div class="abs" style="left:1253px;top:92.5px;width:747px;height:1px;background:#e2e2e2"></div>
<div class="abs" id="json">
<div class="jl" style="left:58px;top:-8.72px"><span style="color:#222222">"AllocatedTips":</span><span style="color:#3b7fc2">874.2</span><span style="color:#222222">,</span></div><div class="jl" style="left:58px;top:19.78px"><span style="color:#222222">"ControlNumber":</span><span style="color:#2b7a1f">"000086242"</span><span style="color:#222222">,</span></div><div class="jl" style="left:58px;top:48.28px"><span style="color:#222222">"DependentCareBenefits":</span><span style="color:#3b7fc2">9873.2</span><span style="color:#222222">,</span></div><div class="jl" style="left:58px;top:76.78px"><span style="color:#222222">"Employee":</span><span style="color:#222222">{</span></div><div class="jl" style="left:78px;top:105.28px"><span style="color:#222222">"_source":</span><span style="color:#2b7a1f">""</span><span style="color:#222222">,</span></div><div class="jl" style="left:78px;top:133.78px"><span style="color:#222222">"Address":</span><span style="color:#222222">{</span></div><div class="jl" style="left:98px;top:162.28px"><span style="color:#222222">"_source":</span><span style="color:#2b7a1f">"4567 MAIN STREET BUFFALO, WA 12345"</span><span style="color:#222222">,</span></div><div class="jl" style="left:98px;top:190.78px"><span style="color:#222222">"houseNumber":</span><span style="color:#2b7a1f">"4567"</span><span style="color:#222222">,</span></div><div class="jl" style="left:98px;top:219.28px"><span style="color:#222222">"road":</span><span style="color:#2b7a1f">"MAIN STREET"</span><span style="color:#222222">,</span></div><div class="jl" style="left:98px;top:247.78px"><span style="color:#222222">"city":</span><span style="color:#2b7a1f">"BUFFALO"</span><span style="color:#222222">,</span></div><div class="jl" style="left:98px;top:276.28px"><span style="color:#222222">"state":</span><span style="color:#2b7a1f">"WA"</span><span style="color:#222222">,</span></div><div class="jl" style="left:98px;top:304.78px"><span style="color:#222222">"postalCode":</span><span style="color:#2b7a1f">"12345"</span><span style="color:#222222">,</span></div><div class="jl" style="left:98px;top:333.28px"><span style="color:#222222">"streetAddress":</span><span style="color:#2b7a1f">"4567 MAIN STREET"</span></div><div class="jl" style="left:78px;top:361.78px"><span style="color:#222222">},</span></div><div class="jl" style="left:78px;top:390.28px"><span style="color:#222222">"Name":</span><span style="color:#2b7a1f">"ANGEL BROWN"</span><span style="color:#222222">,</span></div><div class="jl" style="left:78px;top:418.78px"><span style="color:#222222">"SocialSecurityNumber":</span><span style="color:#2b7a1f">"123-45-6789"</span></div><div class="jl" style="left:58px;top:447.28px"><span style="color:#222222">},</span></div><div class="jl" style="left:58px;top:475.78px"><span style="color:#222222">"Employer":</span><span style="color:#222222">{</span></div><div class="jl" style="left:78px;top:504.28px"><span style="color:#222222">"_source":</span><span style="color:#2b7a1f">""</span><span style="color:#222222">,</span></div><div class="jl" style="left:78px;top:532.78px"><span style="color:#222222">"Address":</span><span style="color:#222222">{</span></div><div class="jl" style="left:98px;top:561.28px"><span style="color:#222222">"_source":</span><span style="color:#2b7a1f">"123 MICROSOFT WAY REDMOND, WA 98765"</span><span style="color:#222222">,</span></div><div class="jl" style="left:98px;top:589.78px"><span style="color:#222222">"houseNumber":</span><span style="color:#2b7a1f">"123"</span><span style="color:#222222">,</span></div><div class="jl" style="left:98px;top:618.28px"><span style="color:#222222">"road":</span><span style="color:#2b7a1f">"MICROSOFT WAY"</span><span style="color:#222222">,</span></div><div class="jl" style="left:98px;top:646.78px"><span style="color:#222222">"city":</span><span style="color:#2b7a1f">"REDMOND"</span><span style="color:#222222">,</span></div><div class="jl" style="left:98px;top:675.28px"><span style="color:#222222">"state":</span><span style="color:#2b7a1f">"WA"</span><span style="color:#222222">,</span></div><div class="jl" style="left:98px;top:703.78px"><span style="color:#222222">"postalCode":</span><span style="color:#2b7a1f">"98765"</span><span style="color:#222222">,</span></div><div class="jl" style="left:98px;top:732.28px"><span style="color:#222222">"streetAddress":</span><span style="color:#2b7a1f">"123 MICROSOFT WAY"</span></div><div class="jl" style="left:78px;top:760.78px"><span style="color:#222222">},</span></div><div class="jl" style="left:78px;top:789.28px"><span style="color:#222222">"IdNumber":</span><span style="color:#2b7a1f">"98-7654321"</span><span style="color:#222222">,</span></div><div class="jl" style="left:78px;top:817.78px"><span style="color:#222222">"Name":</span><span style="color:#2b7a1f">"CONTOSO LTD"</span></div><div class="jl" style="left:58px;top:846.28px"><span style="color:#222222">},</span></div><div class="jl" style="left:58px;top:874.78px"><span style="color:#222222">"FederalIncomeTaxWithheld":</span><span style="color:#3b7fc2">3894.54</span><span style="color:#222222">,</span></div>
</div>
<div class="abs" style="left:1373px;top:91px;width:67px;height:3px;background:#e1532f;border-radius:2px 2px 0 0"></div>
</body></html>
